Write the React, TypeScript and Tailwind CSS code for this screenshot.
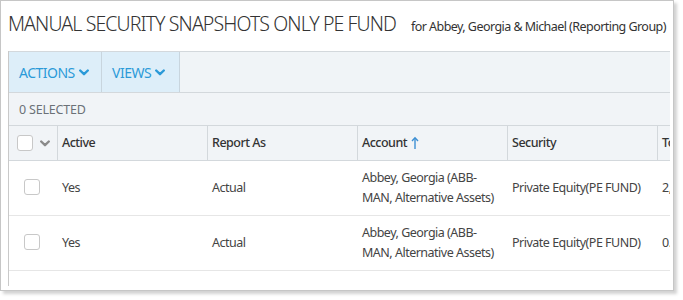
import React from "react";

const font = { fontFamily: '"Noto Sans", "Open Sans", sans-serif' };

function Chevron({ className }: { className?: string }) {
  return (
    <svg width="10" height="7" viewBox="0 0 10 7" className={className}>
      <polyline points="1.2,1.5 5,5.2 8.8,1.5" fill="none" stroke="currentColor" strokeWidth="2.4" strokeLinecap="round" strokeLinejoin="round" />
    </svg>
  );
}

function UpArrow() {
  return (
    <svg width="8" height="14" viewBox="0 0 8 14" className="text-[#3d8fd3]">
      <line x1="4" y1="2" x2="4" y2="13" stroke="currentColor" strokeWidth="1.4" />
      <polyline points="1,5 4,1.8 7,5" fill="none" stroke="currentColor" strokeWidth="1.4" />
    </svg>
  );
}

function Box() {
  return <div className="w-4 h-4 rounded-[3px] border border-[#c8c8c8] bg-white" />;
}

const rows = [
  { active: "Yes", report: "Actual", account: ["Abbey, Georgia (ABB-", "MAN, Alternative Assets)"], security: "Private Equity(PE FUND)", to: "2," },
  { active: "Yes", report: "Actual", account: ["Abbey, Georgia (ABB-", "MAN, Alternative Assets)"], security: "Private Equity(PE FUND)", to: "0." },
];

export default function App() {
  return (
    <div className="w-[683px] h-[300px] bg-white" style={font}>
      <div className="w-[674px] h-[291px] border border-[#c6c6c6] shadow-[3px_3px_3px_rgba(0,0,0,0.18)] bg-white pl-[7px] pr-[3px] flex flex-col overflow-hidden">
        <div className="h-[50px] flex items-baseline pt-[9px] whitespace-nowrap">
          <span className="text-[19.5px] tracking-[-0.9px] font-light text-[#333] leading-[28px]">MANUAL SECURITY SNAPSHOTS ONLY PE FUND</span>
          <span className="text-[12.5px] tracking-[-0.55px] text-[#333] ml-[15px]">for Abbey, Georgia &amp; Michael (Reporting Group)</span>
        </div>
        <div className="flex-1 border-l border-[#c9c9c9] flex flex-col mb-[4px] overflow-hidden">
          <div className="h-[42px] border-t border-b border-[#d3d8dc] bg-[#f0f4f7] flex">
            <div className="w-[93px] bg-[#ddeef9] border-r border-[#c8d5de] flex items-center pl-[10px] gap-[4px] text-[#2b9ad8] text-[14px] tracking-[-0.5px]">
              ACTIONS <Chevron />
            </div>
            <div className="w-[78px] bg-[#ddeef9] border-r border-[#c8d5de] flex items-center pl-[10px] gap-[4px] text-[#2b9ad8] text-[14px] tracking-[-0.5px]">
              VIEWS <Chevron />
            </div>
          </div>
          <div className="h-[32px] bg-[#f1f4f7] flex items-center pl-[10px] pt-[2px] text-[12.5px] tracking-[-0.2px] text-[#6b7177]">0 SELECTED</div>
          <div className="h-[36px] bg-[#f1f4f7] border-t border-b border-[#d3d8dc] flex text-[12.5px] tracking-[-0.5px] font-medium text-[#333] whitespace-nowrap">
            <div className="w-[49px] border-r border-[#d3d8dc] flex items-center pl-[8px] gap-[7px]">
              <Box />
              <Chevron className="text-[#8a8a8a]" />
            </div>
            <div className="w-[150px] border-r border-[#d3d8dc] flex items-center pl-[4px]">Active</div>
            <div className="w-[150px] border-r border-[#d3d8dc] flex items-center pl-[4px]">Report As</div>
            <div className="w-[150px] border-r border-[#d3d8dc] flex items-center pl-[4px] gap-[4px]">Account <UpArrow /></div>
            <div className="w-[150px] border-r border-[#d3d8dc] flex items-center pl-[4px]">Security</div>
            <div className="flex-1 flex items-center pl-[4px] overflow-hidden">Total</div>
          </div>
          {rows.map((r, i) => (
            <div key={i} className="h-[55px] border-b border-[#e6e6e6] flex text-[12.5px] tracking-[-0.5px] text-[#444] whitespace-nowrap">
              <div className="w-[49px] flex items-center pl-[15px] pb-[2px]"><Box /></div>
              <div className="w-[150px] flex items-center pl-[4px]">{r.active}</div>
              <div className="w-[150px] flex items-center pl-[4px]">{r.report}</div>
              <div className="w-[150px] flex flex-col justify-center pl-[4px] leading-[20px]">
                <span>{r.account[0]}</span>
                <span>{r.account[1]}</span>
              </div>
              <div className="w-[150px] flex items-center pl-[4px]">{r.security}</div>
              <div className="flex-1 flex items-center pl-[4px] overflow-hidden">{r.to}</div>
            </div>
          ))}
        </div>
      </div>
    </div>
  );
}
